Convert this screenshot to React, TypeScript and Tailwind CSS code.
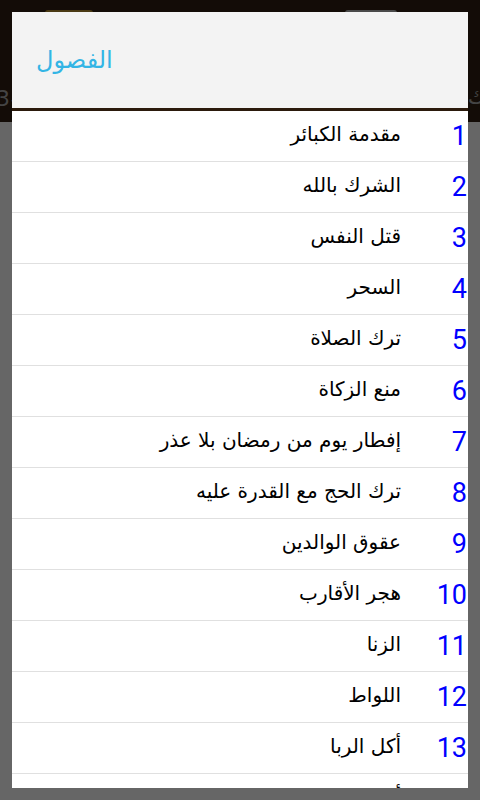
import React from "react"

const chapters = [
  "مقدمة الكبائر",
  "الشرك بالله",
  "قتل النفس",
  "السحر",
  "ترك الصلاة",
  "منع الزكاة",
  "إفطار يوم من رمضان بلا عذر",
  "ترك الحج مع القدرة عليه",
  "عقوق الوالدين",
  "هجر الأقارب",
  "الزنا",
  "اللواط",
  "أكل الربا",
  "أكل مال اليتيم",
]

export default function App() {
  return (
    <div className="relative w-[480px] h-[800px] overflow-hidden bg-[#666666]">
      {/* dimmed activity behind the dialog */}
      <div className="h-[122px] bg-[#130c07] relative">
        <div className="absolute left-[45px] top-[10px] w-[48px] h-[3px] rounded-t bg-[#4a3a14]" />
        <div className="absolute left-[345px] top-[10px] w-[52px] h-[3px] rounded-t bg-[#4a4a4a]" />
        <span className="absolute left-[-4px] top-[82px] text-[22px] text-[#444] font-['DejaVu_Sans',sans-serif]">3#</span>
        <span className="absolute right-[-6px] top-[80px] text-[22px] text-[#444] font-['DejaVu_Sans',sans-serif]">ك</span>
      </div>

      <div className="absolute left-[12px] top-[12px] w-[456px] h-[776px] bg-white overflow-hidden flex flex-col">
        <div className="h-[96px] shrink-0 bg-[#f3f3f3] flex items-center px-[24px]">
          <span className="text-[24px] text-[#33b5e5] font-['DejaVu_Sans',sans-serif]">الفصول</span>
        </div>
        <div className="h-[3px] shrink-0 bg-[#2b1a0c]" />
        <ul className="flex flex-col">
          {chapters.map((title, i) => (
            <li key={i} className="h-[51px] shrink-0 border-b border-[#e0e0e0] flex items-center justify-end">
              <span dir="rtl" className="text-[20px] text-black font-['DejaVu_Sans',sans-serif] pb-[5px]">
                {title}
              </span>
              <span className="w-[67px] text-right pr-[1px] text-[27px] leading-none text-[#0000ff] font-['Roboto',sans-serif]">
                {i + 1}
              </span>
            </li>
          ))}
        </ul>
      </div>
    </div>
  )
}
